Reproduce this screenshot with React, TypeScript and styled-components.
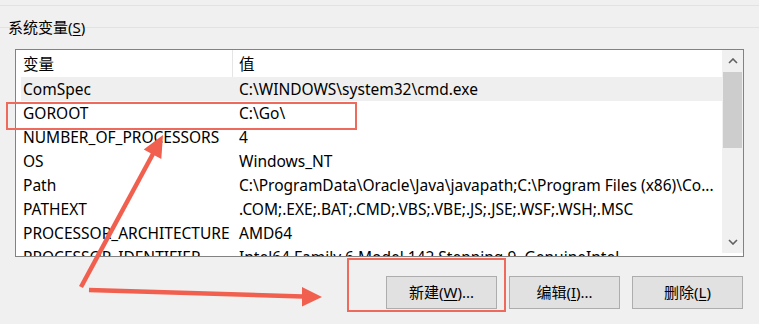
import React from "react";
import styled, { createGlobalStyle } from "styled-components";

const Global = createGlobalStyle`
  html, body { margin: 0; padding: 0; background: #f0f0f0; }
  body { font-family: "Noto Sans", "Noto Sans CJK SC", sans-serif; }
`;

const FONT = `"Noto Sans", "Noto Sans CJK SC", sans-serif`;

const Page = styled.div`
  position: relative;
  width: 759px;
  height: 324px;
  overflow: hidden;
  background: #f0f0f0;
  font-family: ${FONT};
  font-size: 15px;
  color: #000;
`;

const TopBand = styled.div`
  height: 5px;
  border-bottom: 1px solid #e2e2e2;
`;

const GroupTitle = styled.div`
  height: 43px;
  padding-left: 8px;
  box-sizing: border-box;
  background: linear-gradient(#e2e2e2, #e2e2e2) 0 21px / 100% 1px no-repeat;
  line-height: 20px;
  padding-top: 11px;
`;

const TitleText = styled.span`
  position: relative;
`;

const U = styled.span`
  text-decoration: underline;
  text-underline-offset: 2px;
`;

const ListBox = styled.div`
  margin-left: 15px;
  width: 729px;
  height: 208px;
  box-sizing: border-box;
  border: 1px solid #828282;
  background: #fff;
  display: flex;
  overflow: hidden;
`;

const ListArea = styled.div`
  flex: 1;
  padding-left: 5px;
  overflow: hidden;
  font-size: 15.5px;
`;

const Row = styled.div<{ $header?: boolean; $selected?: boolean }>`
  display: grid;
  grid-template-columns: 212px 1fr;
  height: ${(p) => (p.$header ? 27 : 24)}px;
  align-items: center;
  background: ${(p) => (p.$selected ? "#efefef" : "#fff")};
  white-space: nowrap;
`;

const NameCell = styled.div<{ $header?: boolean }>`
  padding-left: 2px;
  height: 100%;
  display: flex;
  align-items: center;
  border-right: ${(p) => (p.$header ? "1px solid #e5e5e5" : "1px solid transparent")};
  box-sizing: border-box;
  overflow: visible;
`;

const ValueCell = styled.div`
  padding-left: 6px;
  overflow: hidden;
`;

const ScrollBar = styled.div`
  width: 21px;
  background: #f0f0f0;
  display: flex;
  flex-direction: column;
  align-items: center;
  margin-bottom: 3px;
`;

const ScrollArrow = styled.div`
  height: 22px;
  width: 100%;
  display: flex;
  align-items: center;
  justify-content: center;
`;

const Thumb = styled.div`
  width: 19px;
  height: 76px;
  background: #cdcdcd;
`;

const Track = styled.div`
  flex: 1;
  display: flex;
  flex-direction: column;
  align-items: center;
`;

const ButtonRow = styled.div`
  display: flex;
  justify-content: flex-end;
  gap: 12px;
  padding-right: 16px;
  margin-top: 19px;
`;

const Button = styled.button`
  width: 111px;
  height: 33px;
  box-sizing: border-box;
  background: #e1e1e1;
  border: 1px solid #adadad;
  font-family: ${FONT};
  font-size: 15px;
  color: #000;
  padding: 0;
  line-height: 1;
`;

const Highlight = styled.div<{ $l: number; $t: number; $w: number; $h: number }>`
  position: absolute;
  left: ${(p) => p.$l}px;
  top: ${(p) => p.$t}px;
  width: ${(p) => p.$w}px;
  height: ${(p) => p.$h}px;
  border: 2px solid #ee6a5c;
  box-sizing: border-box;
  pointer-events: none;
`;

const Overlay = styled.svg`
  position: absolute;
  left: 0;
  top: 0;
  pointer-events: none;
`;

const rows: [string, string][] = [
  ["ComSpec", "C:\\WINDOWS\\system32\\cmd.exe"],
  ["GOROOT", "C:\\Go\\"],
  ["NUMBER_OF_PROCESSORS", "4"],
  ["OS", "Windows_NT"],
  ["Path", "C:\\ProgramData\\Oracle\\Java\\javapath;C:\\Program Files (x86)\\Co..."],
  ["PATHEXT", ".COM;.EXE;.BAT;.CMD;.VBS;.VBE;.JS;.JSE;.WSF;.WSH;.MSC"],
  ["PROCESSOR_ARCHITECTURE", "AMD64"],
  ["PROCESSOR_IDENTIFIER", "Intel64 Family 6 Model 142 Stepping 9, GenuineIntel"],
];

const Chevron = ({ down }: { down?: boolean }) => (
  <svg width="10" height="6" viewBox="0 0 10 6">
    <path
      d={down ? "M1 1 L5 5 L9 1" : "M1 5 L5 1 L9 5"}
      fill="none"
      stroke="#606060"
      strokeWidth="1.6"
    />
  </svg>
);

export default function App() {
  return (
    <>
      <Global />
      <Page>
        <TopBand />
        <GroupTitle>
          <TitleText>
            系统变量(<U>S</U>)
          </TitleText>
        </GroupTitle>
        <ListBox>
          <ListArea>
            <Row $header>
              <NameCell $header>变量</NameCell>
              <ValueCell>值</ValueCell>
            </Row>
            {rows.map(([n, v], i) => (
              <Row key={n} $selected={i === 0}>
                <NameCell>{n}</NameCell>
                <ValueCell>{v}</ValueCell>
              </Row>
            ))}
          </ListArea>
          <ScrollBar>
            <ScrollArrow>
              <Chevron />
            </ScrollArrow>
            <Track>
              <Thumb />
            </Track>
            <ScrollArrow>
              <Chevron down />
            </ScrollArrow>
          </ScrollBar>
        </ListBox>
        <ButtonRow>
          <Button>
            新建(<U>W</U>)...
          </Button>
          <Button>
            编辑(<U>I</U>)...
          </Button>
          <Button>
            删除(<U>L</U>)
          </Button>
        </ButtonRow>
        <Highlight $l={6} $t={102} $w={351} $h={28} />
        <Highlight $l={347} $t={258} $w={159} $h={54} />
        <Overlay width="759" height="324" viewBox="0 0 759 324">
          <line x1="81" y1="287" x2="154" y2="152" stroke="#f15f4f" strokeWidth="4.5" />
          <polygon points="163,135 143.7,149.5 161.3,159.1" fill="#f15f4f" />
          <line x1="89" y1="290" x2="303" y2="296.5" stroke="#f15f4f" strokeWidth="4.5" />
          <polygon points="322,297 302,287 302,306.5" fill="#f15f4f" />
        </Overlay>
      </Page>
    </>
  );
}
